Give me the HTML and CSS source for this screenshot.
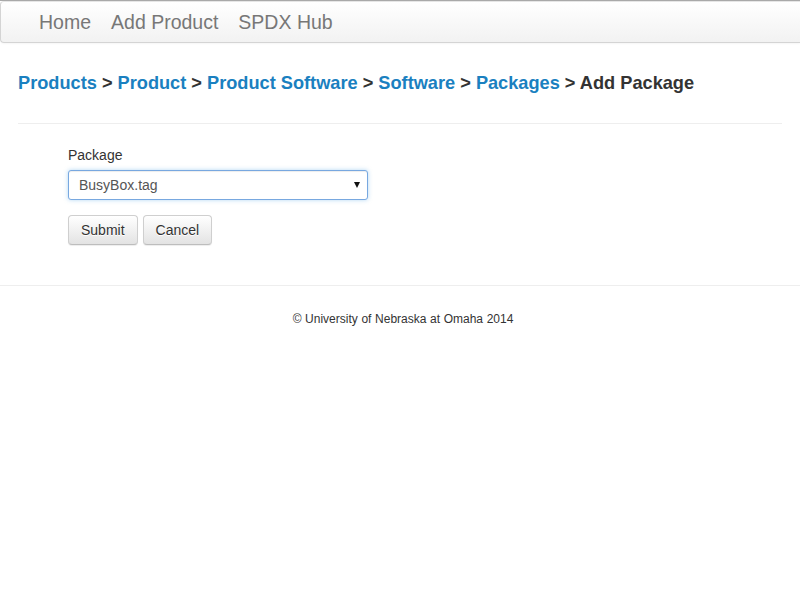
FILE: index.html
```html
<!DOCTYPE html>
<html>
<head>
<meta charset="utf-8">
<link rel="stylesheet" href="styles.css">
</head>
<body>
<div class="topline"></div>
<nav class="navbar">
  <a class="nav-link" href="#">Home</a>
  <a class="nav-link" href="#">Add Product</a>
  <a class="nav-link" href="#">SPDX Hub</a>
</nav>
<div class="container">
  <div class="page-header">
    <h3 class="crumbs"><a href="#">Products</a> &gt; <a href="#">Product</a> &gt; <a href="#">Product Software</a> &gt; <a href="#">Software</a> &gt; <a href="#">Packages</a> &gt; Add Package</h3>
  </div>
  <form class="form">
    <label class="label" for="pkg">Package</label>
    <div class="select-wrap">
      <select id="pkg" class="select">
        <option>BusyBox.tag</option>
      </select>
    </div>
    <div class="actions">
      <button type="button" class="btn">Submit</button>
      <button type="button" class="btn">Cancel</button>
    </div>
  </form>
</div>
<footer class="footer">© University of Nebraska at Omaha 2014</footer>
</body>
</html>
```

FILE: styles.css
```css
* { box-sizing: border-box; }
html, body {
  margin: 0;
  padding: 0;
  background: #fff;
  font-family: "Liberation Sans", Arial, sans-serif;
  font-size: 14px;
  line-height: 20px;
  color: #333;
}
.topline {
  height: 1px;
  background: #a9a9a9;
}
.navbar {
  display: flex;
  height: 42px;
  padding-left: 28px;
  align-items: center;
  background-image: linear-gradient(to bottom, #ffffff 0, #f2f2f2 100%);
  border: 1px solid #d4d4d4;
  border-top-color: #e6e6e6;
  border-right: none;
  border-radius: 4px 0 0 4px;
  box-shadow: 0 1px 2px rgba(0,0,0,0.04);
}
.nav-link {
  font-size: 19.5px;
  line-height: 24px;
  color: #777;
  text-decoration: none;
  padding: 0 10px;
  margin-top: -1px;
}
.container {
  padding: 0 18px;
}
.page-header {
  padding-top: 30px;
  padding-bottom: 30px;
  border-bottom: 1px solid #eee;
}
.crumbs {
  margin: 0;
  font-size: 18.2px;
  line-height: 20px;
  font-weight: bold;
  color: #333;
}
.crumbs a {
  color: #1a80c0;
  text-decoration: none;
}
.form {
  padding: 21px 0 0 50px;
  display: flex;
  flex-direction: column;
  align-items: flex-start;
}
.label {
  display: block;
  margin-bottom: 5px;
  color: #333;
}
.select-wrap {
  position: relative;
  width: 300px;
}
.select-wrap::after {
  content: "";
  position: absolute;
  right: 8px;
  top: 12px;
  border-left: 3.5px solid transparent;
  border-right: 3.5px solid transparent;
  border-top: 6px solid #111;
  pointer-events: none;
}
.select {
  -webkit-appearance: none;
  appearance: none;
  display: block;
  width: 300px;
  height: 30px;
  padding: 4px 10px;
  font-family: inherit;
  font-size: 14px;
  line-height: 20px;
  color: #555;
  background: #fff;
  border: 1px solid #78a8e0;
  border-radius: 3px;
  box-shadow: inset 0 1px 1px rgba(0,0,0,0.075), 0 0 4px rgba(102,175,233,0.5);
  outline: none;
}
.actions {
  display: flex;
  gap: 5px;
  margin-top: 15px;
}
.btn {
  height: 30px;
  padding: 4px 12px;
  font-family: inherit;
  font-size: 14px;
  line-height: 20px;
  color: #333;
  background-image: linear-gradient(to bottom, #ffffff 0, #e3e3e3 100%);
  border: 1px solid #cfcfcf;
  border-bottom-color: #bdbdbd;
  border-radius: 4px;
  text-shadow: 0 1px 0 #fff;
  box-shadow: inset 0 1px 0 rgba(255,255,255,0.15), 0 1px 1px rgba(0,0,0,0.075);
}
.footer {
  margin-top: 40px;
  border-top: 1px solid #eee;
  padding-top: 25px;
  text-align: center;
  font-size: 12px;
  line-height: 16px;
  color: #333;
  padding-left: 6px;
  word-spacing: 0.3px;
}
```
